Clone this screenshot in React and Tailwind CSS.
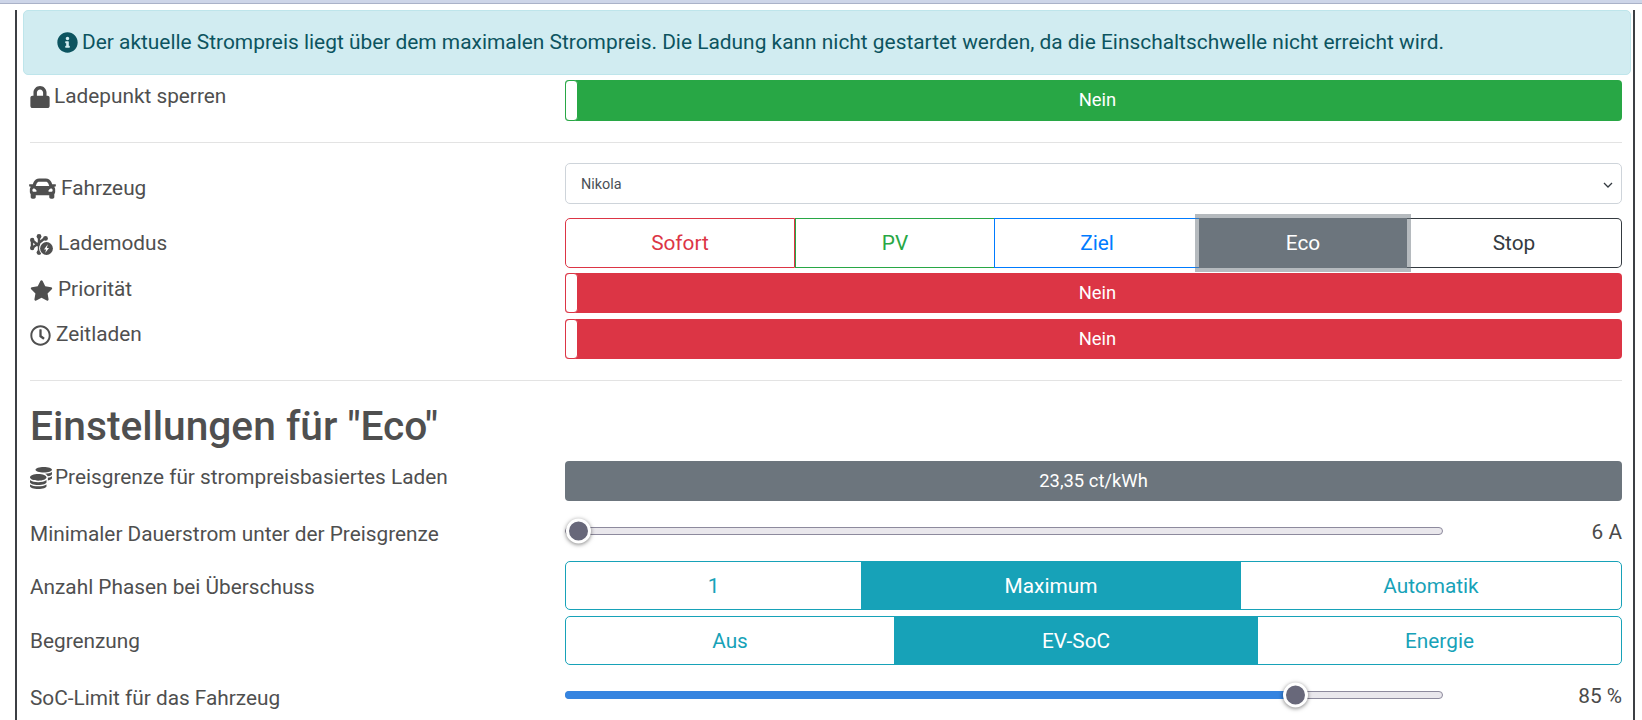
import { FaLock, FaCar, FaStar, FaRegClock, FaCoins, FaInfoCircle } from 'react-icons/fa';

// custom icon: hub nodes with a circled bolt
function ModeIcon({ className }) {
  return (
    <svg className={className} viewBox="0 0 23 21" fill="currentColor">
      <g stroke="currentColor" strokeWidth="2.4" fill="none">
        <path d="M2 6v8M2 6l7 6M2 14l7-5M9 2v17M9 9l6-5" />
      </g>
      <circle cx="9" cy="2.4" r="2.4" />
      <circle cx="2.2" cy="6" r="2.2" />
      <circle cx="2.2" cy="14" r="2.2" />
      <circle cx="9" cy="18.6" r="2.4" />
      <circle cx="15.5" cy="4.4" r="2.4" />
      <circle cx="16.5" cy="14.5" r="7.4" fill="#fff" />
      <circle cx="16.5" cy="14.5" r="6.4" />
      <path d="M17.8 10.2l-3.8 5.2h2.1l-.9 3.7 3.8-5.2h-2.1z" fill="#fff" />
    </svg>
  );
}

function Toggle({ color, border, height, text }) {
  return (
    <div className={`relative flex items-center justify-center rounded-[4px] ${height} ${color}`}>
      <span className={`absolute left-0 top-0 h-full w-[13px] rounded-[4px] border bg-white ${border}`} />
      <span className="pb-px pl-[8px] text-[18.4px] text-white">{text}</span>
    </div>
  );
}

function Slider({ thumbLeft, fill, value }) {
  return (
    <div className="flex h-full items-center justify-between">
      <div className="relative h-[8px] w-[878px] rounded-full border border-[#8d8a9d] bg-[#e9e7ec]">
        {fill && <div className="absolute -inset-y-px -left-px rounded-full bg-[#3584e0]" style={{ width: fill }} />}
        <div
          className="absolute top-1/2 h-[25px] w-[25px] -translate-y-1/2 rounded-full border-[3px] border-white bg-[#68687a] shadow-[0_1px_4px_rgba(0,0,0,0.5)]"
          style={{ left: thumbLeft }}
        />
      </div>
      <span className="pt-[3px] text-[20.8px] text-[#4a4a4a]">{value}</span>
    </div>
  );
}

function Label({ icon, children, className = '' }) {
  return (
    <div className={`flex w-[535px] shrink-0 items-center text-[20.8px] text-[#4f4f4f] ${className}`}>
      {icon}
      <span>{children}</span>
    </div>
  );
}

function InfoButton({ width, active, children }) {
  return (
    <div
      className={`flex h-full items-center justify-center pt-[2px] text-[20.8px] ${width} ${active ? 'bg-[#17a2b8] text-white' : 'text-[#17a2b8]'}`}
    >
      {children}
    </div>
  );
}

export default function App() {
  return (
    <div className="h-[720px] overflow-hidden bg-white font-['Roboto',sans-serif]">
      <div className="h-[4px] border-b border-[#aab2c8] bg-[#cdd5e8]" />

      {/* Card */}
      <div className="ml-[15px] h-[716px] w-[1620px] border-x-2 border-[#3c3f44] pl-[13px] pr-[9px]">
        {/* Alert */}
        <div className="-ml-[7px] mt-[6px] flex h-[65px] w-[1608px] items-center rounded-[5px] border border-[#bee5eb] bg-[#d1ecf1] pl-[33px] text-[20.9px] text-[#0c5460]">
          <FaInfoCircle className="mr-[4px] h-[21px] w-[21px]" />
          Der aktuelle Strompreis liegt über dem maximalen Strompreis. Die Ladung kann nicht gestartet werden, da die Einschaltschwelle nicht erreicht wird.
        </div>

        <div className="w-[1592px]">
          {/* Ladepunkt sperren */}
          <div className="mt-[5px] flex h-[41px]">
            <Label icon={<FaLock className="mr-[4px] h-[22px] w-[20px]" />} className="h-[34px]">Ladepunkt sperren</Label>
            <div className="flex-1">
              <Toggle color="bg-[#28a745]" border="border-[#28a745]" height="h-[41px]" text="Nein" />
            </div>
          </div>

          <hr className="mt-[21px] border-[#e3e3e3]" />

          {/* Fahrzeug */}
          <div className="mt-[20px] flex h-[41px]">
            <Label icon={<FaCar className="mr-[5px] h-[27px] w-[27px]" />} className="-ml-px pt-[10px]">Fahrzeug</Label>
            <div className="ml-px flex flex-1 items-center justify-between rounded-[5px] border border-[#ced4da] pl-[15px] pr-[8px] pt-[2px] text-[14.4px] text-[#495057]">
              <span>Nikola</span>
              <svg className="h-[8px] w-[10px]" viewBox="0 0 10 8" fill="none" stroke="#343a40" strokeWidth="1.3">
                <path d="M1 2l4 4 4-4" />
              </svg>
            </div>
          </div>

          {/* Lademodus */}
          <div className="mt-[14px] flex h-[50px]">
            <Label icon={<ModeIcon className="mr-[5px] h-[21px] w-[23px]" />} className="pt-[2px]">Lademodus</Label>
            <div className="flex flex-1 text-[20.8px]">
              <div className="flex w-[230px] items-center justify-center rounded-l-[5px] border border-[#dc3545] pt-[2px] text-[#dc3545]">Sofort</div>
              <div className="flex w-[199px] items-center justify-center border-y border-l border-[#28a745] pt-[2px] text-[#28a745]">PV</div>
              <div className="flex w-[205px] items-center justify-center border-y border-l border-[#007bff] pt-[2px] text-[#007bff]">Ziel</div>
              <div className="z-10 flex w-[208px] items-center justify-center bg-[#6c757d] pt-[2px] text-white shadow-[0_0_0_4px_rgba(108,117,125,0.5)]">Eco</div>
              <div className="flex flex-1 items-center justify-center rounded-r-[5px] border-y border-r border-[#343a40] pt-[2px] text-[#343a40]">Stop</div>
            </div>
          </div>

          {/* Priorität */}
          <div className="mt-[5px] flex h-[40px]">
            <Label icon={<FaStar className="mr-[5px] h-[23px] w-[23px]" />} className="h-[34px]">Priorität</Label>
            <div className="flex-1">
              <Toggle color="bg-[#dc3545]" border="border-[#dc3545]" height="h-[40px]" text="Nein" />
            </div>
          </div>

          {/* Zeitladen */}
          <div className="mt-[6px] flex h-[40px]">
            <Label icon={<FaRegClock className="mr-[5px] h-[21px] w-[21px]" />} className="h-[32px]">Zeitladen</Label>
            <div className="flex-1">
              <Toggle color="bg-[#dc3545]" border="border-[#dc3545]" height="h-[40px]" text="Nein" />
            </div>
          </div>

          <hr className="mt-[21px] border-[#e3e3e3]" />

          <h2 className="mt-[21px] text-[40.7px] font-medium leading-[48px] text-[#4f4f4f]">Einstellungen für "Eco"</h2>

          {/* Preisgrenze */}
          <div className="mt-[11px] flex h-[40px]">
            <Label icon={<FaCoins className="mr-[3px] h-[22px] w-[22px]" />} className="h-[34px]">Preisgrenze für strompreisbasiertes Laden</Label>
            <div className="flex flex-1 items-center justify-center rounded-[4px] bg-[#6c757d] text-[18.4px] text-white">23,35 ct/kWh</div>
          </div>

          {/* Minimaler Dauerstrom */}
          <div className="mt-[9px] flex h-[42px]">
            <Label className="pt-[8px]">Minimaler Dauerstrom unter der Preisgrenze</Label>
            <div className="flex-1">
              <Slider thumbLeft="0px" value="6 A" />
            </div>
          </div>

          {/* Anzahl Phasen */}
          <div className="mt-[9px] flex h-[49px]">
            <Label className="pt-[4px]">Anzahl Phasen bei Überschuss</Label>
            <div className="flex flex-1 overflow-hidden rounded-[5px] border border-[#17a2b8]">
              <InfoButton width="w-[295px]">1</InfoButton>
              <InfoButton width="w-[380px]" active>Maximum</InfoButton>
              <InfoButton width="flex-1">Automatik</InfoButton>
            </div>
          </div>

          {/* Begrenzung */}
          <div className="mt-[6px] flex h-[49px]">
            <Label className="pt-[2px]">Begrenzung</Label>
            <div className="flex flex-1 overflow-hidden rounded-[5px] border border-[#17a2b8]">
              <InfoButton width="w-[328px]">Aus</InfoButton>
              <InfoButton width="w-[364px]" active>EV-SoC</InfoButton>
              <InfoButton width="flex-1">Energie</InfoButton>
            </div>
          </div>

          {/* SoC-Limit */}
          <div className="mt-[9px] flex h-[42px]">
            <Label className="pt-[8px]">SoC-Limit für das Fahrzeug</Label>
            <div className="flex-1">
              <Slider thumbLeft="717px" fill="730px" value="85 %" />
            </div>
          </div>
        </div>
      </div>
    </div>
  );
}
